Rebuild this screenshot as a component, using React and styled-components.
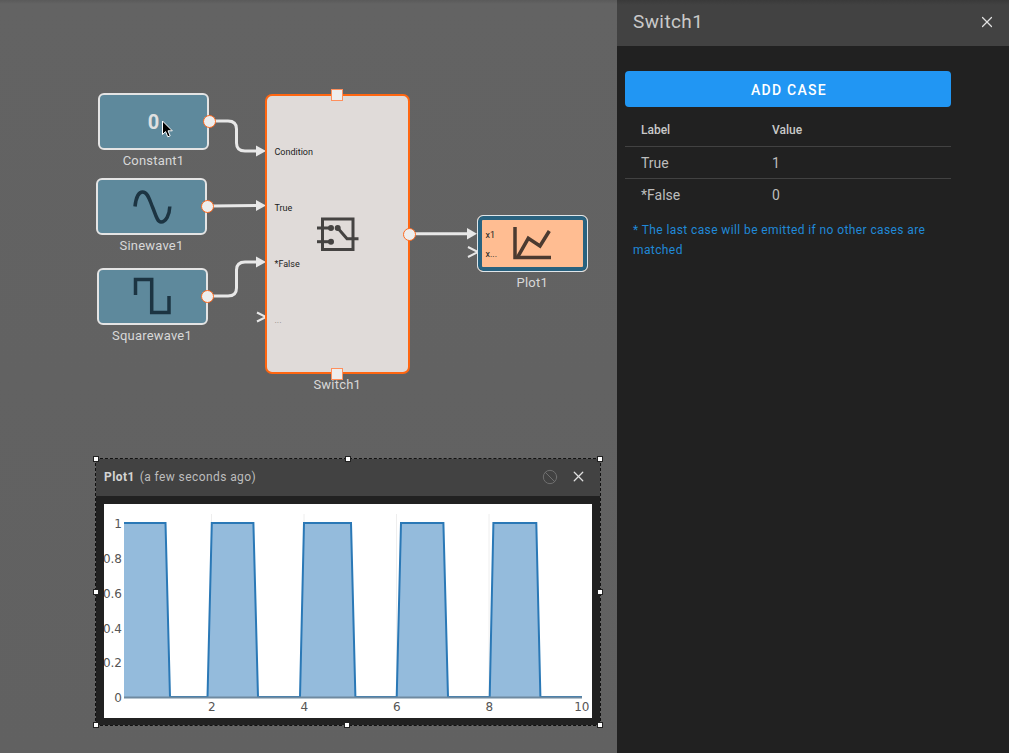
import React from "react";
import styled, { createGlobalStyle } from "styled-components";
import { X, Ban } from "lucide-react";

const GlobalStyle = createGlobalStyle`
  html, body {
    margin: 0;
    height: 100%;
    background: #616161;
  }
  body {
    font-family: Roboto, "Liberation Sans", sans-serif;
  }
`;

const blocks = [
  { name: "Constant1", left: 98, top: 93, kind: "constant" },
  { name: "Sinewave1", left: 96, top: 178, kind: "sine" },
  { name: "Squarewave1", left: 96.5, top: 267.5, kind: "square" },
];

const cases = [
  { label: "True", value: "1" },
  { label: "*False", value: "0" },
];

const switchPorts = ["Condition", "True", "*False", "..."];

const xTicks = [2, 4, 6, 8, 10];
const yTicks = [
  { label: "1", y: 19 },
  { label: "0.8", y: 54 },
  { label: "0.6", y: 89 },
  { label: "0.4", y: 124 },
  { label: "0.2", y: 158 },
  { label: "0", y: 193 },
];

// plot line, in coordinates of the white chart area
const trace =
  "20,19 61.5,19 66,193 103.5,193 107.8,19 149.4,19 154,193 196,193 200,19 247,19 251.4,193 292.7,193 297,19 339.4,19 344,193 385.7,193 389.4,19 432.3,19 436.4,193 478,193";

const App = () => (
  <Page>
    <GlobalStyle />
    <Canvas>
      <Wires viewBox="0 0 617 753" width="617" height="753">
        <g fill="none" stroke="#e8e8e8" strokeWidth="3">
          <path d="M214 121 H228 Q236.500 121 236.500 129 V143 Q236.500 151 245 151 H258" />
          <path d="M212 206 L258 205.500" />
          <path d="M212 296 H228 Q236.500 296 236.500 288 V270 Q236.500 262 245 262 H258" />
          <path d="M414 233.700 H469" />
        </g>
        <g fill="#e8e8e8">
          <path d="M256 145.500 L266 151 L256 156.500 Z" />
          <path d="M256 200 L266 205.500 L256 211 Z" />
          <path d="M256 256.500 L266 262 L256 267.500 Z" />
          <path d="M467 228 L477 233.700 L467 239.400 Z" />
        </g>
        <g fill="none" stroke="#e8e8e8" strokeWidth="2">
          <path d="M257 312.500 L266 317 L257 321.500" />
          <path d="M468 247 L478 252 L468 257" />
        </g>
      </Wires>

      {blocks.map((b) => (
        <Block key={b.name} $left={b.left} $top={b.top} $width={111}>
          <BlockBody>
            {b.kind === "constant" && <ConstantValue>0</ConstantValue>}
            {b.kind === "sine" && (
              <svg width="40" height="36" viewBox="0 0 40 36" fill="none" stroke="#1c3442" strokeWidth="3.500">
                <path d="M3 17.500 C4 8 7 3 10.500 3 C16 3 17.500 11 20.500 18 C23.500 25 25 33 29 33 C34 33 37.500 26 37.800 17.500" />
              </svg>
            )}
            {b.kind === "square" && (
              <svg width="40" height="38" viewBox="0 0 40 38" fill="none" stroke="#1c3442" strokeWidth="3.500">
                <path d="M3.500 18 V2.500 H19.700 V35.500 H37 V19" />
              </svg>
            )}
            <OutPort />
          </BlockBody>
          <BlockName>{b.name}</BlockName>
        </Block>
      ))}

      <Block $left={265} $top={94} $width={144.5}>
        <SwitchBody>
          <HandleSquare $edge="top" />
          <HandleSquare $edge="bottom" />
          <PortColumn>
            {switchPorts.map((p) => (
              <PortLabel key={p} $faint={p === "..."}>
                {p}
              </PortLabel>
            ))}
          </PortColumn>
          <svg width="43" height="37" viewBox="0 0 43 37" fill="none" stroke="#454342" strokeWidth="3">
            <rect x="6.500" y="3" width="30.500" height="30.500" />
            <path d="M1 12 H15" />
            <path d="M1 25.700 H15" />
            <path d="M21.700 12 L31 22.700 H42.500" />
            <circle cx="15" cy="12" r="1.500" fill="#454342" />
            <circle cx="15" cy="25.700" r="1.500" fill="#454342" />
            <circle cx="21.700" cy="12" r="1.500" fill="#454342" />
          </svg>
          <OutPort />
        </SwitchBody>
        <BlockName>Switch1</BlockName>
      </Block>

      <Block $left={476.5} $top={215} $width={111.5}>
        <PlotBody>
          <PlotPorts>
            <PlotPort>x1</PlotPort>
            <PlotPort>x...</PlotPort>
          </PlotPorts>
          <svg width="39" height="35" viewBox="0 0 39 35" fill="none" stroke="#4b3a30" strokeWidth="3.500">
            <path d="M2 1 V31.500 H38" />
            <path d="M4.700 31 L15.300 12.300 L27 20 L36.300 5" />
          </svg>
        </PlotBody>
        <BlockName>Plot1</BlockName>
      </Block>

      <PlotWindow>
        <Grip $x="left" $y="top" />
        <Grip $x="centerTop" $y="top" />
        <Grip $x="right" $y="top" />
        <Grip $x="left" $y="middle" />
        <Grip $x="right" $y="middle" />
        <Grip $x="left" $y="bottom" />
        <Grip $x="center" $y="bottom" />
        <Grip $x="right" $y="bottom" />
        <WindowHeader>
          <WindowTitle>
            <strong>Plot1</strong> (a few seconds ago)
          </WindowTitle>
          <Ban size={16} color="#6f6f6f" strokeWidth={1.500} />
          <X size={17} color="#e0e0e0" strokeWidth={1.800} />
        </WindowHeader>
        <WindowBody>
          <ChartArea>
            <svg width="488" height="214" viewBox="0 0 488 214">
              <g stroke="#eeeeee" strokeWidth="1">
                <path d="M107.500 10 V193" />
                <path d="M200 10 V193" />
                <path d="M292.500 10 V193" />
                <path d="M385 10 V193" />
              </g>
              <polygon points={`${trace} 478,193 20,193`} fill="#94bbdc" />
              <polyline points={trace} fill="none" stroke="#2a78b6" strokeWidth="2" />
              <path d="M20 193.500 H478" stroke="#6f8aa0" strokeWidth="2" />
              <g fontFamily="'DejaVu Sans', sans-serif" fontSize="12" fill="#555555">
                {yTicks.map((t) => (
                  <text key={t.label} x="18" y={t.y + 4.500} textAnchor="end">
                    {t.label}
                  </text>
                ))}
                {xTicks.map((t) => (
                  <text key={t} x={15.300 + t * 46.250} y="207" textAnchor="middle">
                    {t}
                  </text>
                ))}
              </g>
            </svg>
          </ChartArea>
        </WindowBody>
      </PlotWindow>

      <Cursor width="13" height="18" viewBox="0 0 13 18">
        <path
          d="M1.500 1 V14.500 L4.600 11.600 L6.800 16.800 L9.200 15.800 L7 10.800 H11.300 Z"
          fill="#000000"
          stroke="#ffffff"
          strokeWidth="1"
        />
      </Cursor>
    </Canvas>

    <Sidebar>
      <SidebarHeader>
        <SidebarTitle>Switch1</SidebarTitle>
        <X size={18} color="#e0e0e0" strokeWidth={1.600} />
      </SidebarHeader>
      <SidebarContent>
        <AddButton>ADD CASE</AddButton>
        <CaseTable>
          <colgroup>
            <col width="131" />
            <col />
          </colgroup>
          <thead>
            <tr>
              <HeadCell>Label</HeadCell>
              <HeadCell>Value</HeadCell>
            </tr>
          </thead>
          <tbody>
            {cases.map((c) => (
              <tr key={c.label}>
                <Cell>{c.label}</Cell>
                <Cell>{c.value}</Cell>
              </tr>
            ))}
          </tbody>
        </CaseTable>
        <Note>* The last case will be emitted if no other cases are matched</Note>
      </SidebarContent>
    </Sidebar>
  </Page>
);

const Page = styled.div`
  display: flex;
  width: 1009px;
  height: 753px;
  overflow: hidden;
`;

const Canvas = styled.div`
  position: relative;
  flex: 0 0 617px;
  height: 100%;
  background: linear-gradient(#5a5a5a 0, #636363 4px, #616161 100%);
`;

const Wires = styled.svg`
  position: absolute;
  left: 0;
  top: 0;
`;

const Cursor = styled.svg`
  position: absolute;
  left: 161px;
  top: 120px;
`;

const Block = styled.div`
  position: absolute;
  left: ${(p) => p.$left}px;
  top: ${(p) => p.$top}px;
  width: ${(p) => p.$width}px;
  display: flex;
  flex-direction: column;
  align-items: center;
`;

const BlockBody = styled.div`
  position: relative;
  box-sizing: border-box;
  width: 100%;
  height: 57px;
  display: flex;
  align-items: center;
  justify-content: center;
  background: #5e899c;
  border: 2px solid #e4e4e4;
  border-radius: 6px;
`;

const ConstantValue = styled.span`
  font-size: 20px;
  font-weight: 700;
  color: #e0e0e0;
`;

const BlockName = styled.div`
  margin-top: 3px;
  font-size: 13px;
  line-height: 16px;
  color: #d8d8d8;
  letter-spacing: 0.2px;
`;

const OutPort = styled.span`
  position: absolute;
  right: -8.5px;
  top: 50%;
  box-sizing: border-box;
  width: 13px;
  height: 13px;
  margin-top: -6.5px;
  background: #eeeeee;
  border: 1.500px solid #ff6a1f;
  border-radius: 50%;
`;

const SwitchBody = styled.div`
  position: relative;
  box-sizing: border-box;
  width: 100%;
  height: 280px;
  display: flex;
  align-items: center;
  justify-content: center;
  background: #e0dbd9;
  border: 2.500px solid #ff6611;
  border-radius: 7px;
`;

const HandleSquare = styled.span`
  position: absolute;
  left: 50%;
  ${(p) => (p.$edge === "top" ? "top: -7.5px;" : "bottom: -7.5px;")}
  box-sizing: border-box;
  width: 12px;
  height: 12px;
  margin-left: -6px;
  background: #eeeeee;
  border: 1.500px solid #ff8f5c;
`;

const PortColumn = styled.div`
  position: absolute;
  left: 7.5px;
  top: 50px;
  display: flex;
  flex-direction: column;
  gap: 44px;
`;

const PortLabel = styled.span`
  font-size: 9px;
  line-height: 12px;
  color: ${(p) => (p.$faint ? "#8a8685" : "#212121")};
`;

const PlotBody = styled.div`
  position: relative;
  box-sizing: border-box;
  width: 100%;
  height: 57px;
  display: flex;
  align-items: center;
  justify-content: center;
  padding-left: 1px;
  background: #ffbd92;
  border: 1.500px solid #e0e6ea;
  border-radius: 6px;
  box-shadow: inset 0 0 0 4px #29627f;
`;

const PlotPorts = styled.div`
  position: absolute;
  left: 8px;
  top: 12.5px;
  display: flex;
  flex-direction: column;
  gap: 7px;
`;

const PlotPort = styled.span`
  font-size: 9px;
  line-height: 12px;
  color: #212121;
`;

const PlotWindow = styled.div`
  position: absolute;
  left: 95px;
  top: 458px;
  box-sizing: border-box;
  width: 506px;
  height: 268px;
  display: flex;
  flex-direction: column;
  border: 1px dashed #111111;
`;

const gripX = {
  left: "-3px",
  center: "calc(50% - 4px)",
  centerTop: "calc(50% - 3px)",
  right: "calc(100% - 3px)",
};
const gripY = { top: "-3px", middle: "calc(50% - 3px)", bottom: "calc(100% - 3px)" };

const Grip = styled.span`
  position: absolute;
  left: ${(p) => gripX[p.$x]};
  top: ${(p) => gripY[p.$y]};
  box-sizing: border-box;
  width: 6px;
  height: 6px;
  background: #ffffff;
  border: 1px solid #222222;
  z-index: 1;
`;

const WindowHeader = styled.div`
  box-sizing: border-box;
  flex: 0 0 37px;
  display: flex;
  align-items: center;
  gap: 12px;
  padding: 0 13px 2px 8px;
  background: #424242;
`;

const WindowTitle = styled.div`
  flex: 1;
  font-size: 12px;
  color: #bdbdbd;
  letter-spacing: 0.42px;

  strong {
    margin-right: 1.5px;
    font-weight: 700;
    color: #d4d4d4;
  }
`;

const WindowBody = styled.div`
  flex: 1;
  padding: 8px 8px 7px;
  background: #212121;
`;

const ChartArea = styled.div`
  height: 214px;
  background: #ffffff;

  svg {
    display: block;
  }
`;

const Sidebar = styled.aside`
  flex: 0 0 392px;
  height: 100%;
  background: #212121;
`;

const SidebarHeader = styled.div`
  box-sizing: border-box;
  height: 46px;
  display: flex;
  align-items: center;
  justify-content: space-between;
  padding: 0 13px 3px 16px;
  background: linear-gradient(#3a3a3a 0, #424242 5px);
`;

const SidebarTitle = styled.div`
  font-size: 19px;
  color: #c9c9c9;
  letter-spacing: 0.4px;
`;

const SidebarContent = styled.div`
  width: 326px;
  padding: 25px 0 0 8px;
`;

const AddButton = styled.button`
  display: block;
  width: 100%;
  height: 36px;
  padding: 1px 0 0 2px;
  background: #2196f3;
  border: 0;
  border-radius: 4px;
  color: #ffffff;
  font-family: inherit;
  font-size: 14px;
  font-weight: 500;
  letter-spacing: 1.250px;
`;

const CaseTable = styled.table`
  width: 100%;
  margin-top: 6px;
  border-collapse: collapse;
  table-layout: fixed;
`;

const HeadCell = styled.th`
  height: 33px;
  padding: 0 0 0 16px;
  border-bottom: 1px solid #424242;
  font-size: 12px;
  font-weight: 500;
  color: #c9c9c9;
  text-align: left;
`;

const Cell = styled.td`
  height: 31px;
  padding: 0 0 0 16px;
  border-bottom: 1px solid #424242;
  font-size: 14px;
  color: #bdbdbd;

  tr:last-child & {
    border-bottom: 0;
  }
`;

const Note = styled.p`
  margin: 10px 0 0;
  padding-left: 8px;
  font-size: 12px;
  line-height: 20px;
  letter-spacing: 0.4px;
  color: #2089d8;
`;

export default App;
